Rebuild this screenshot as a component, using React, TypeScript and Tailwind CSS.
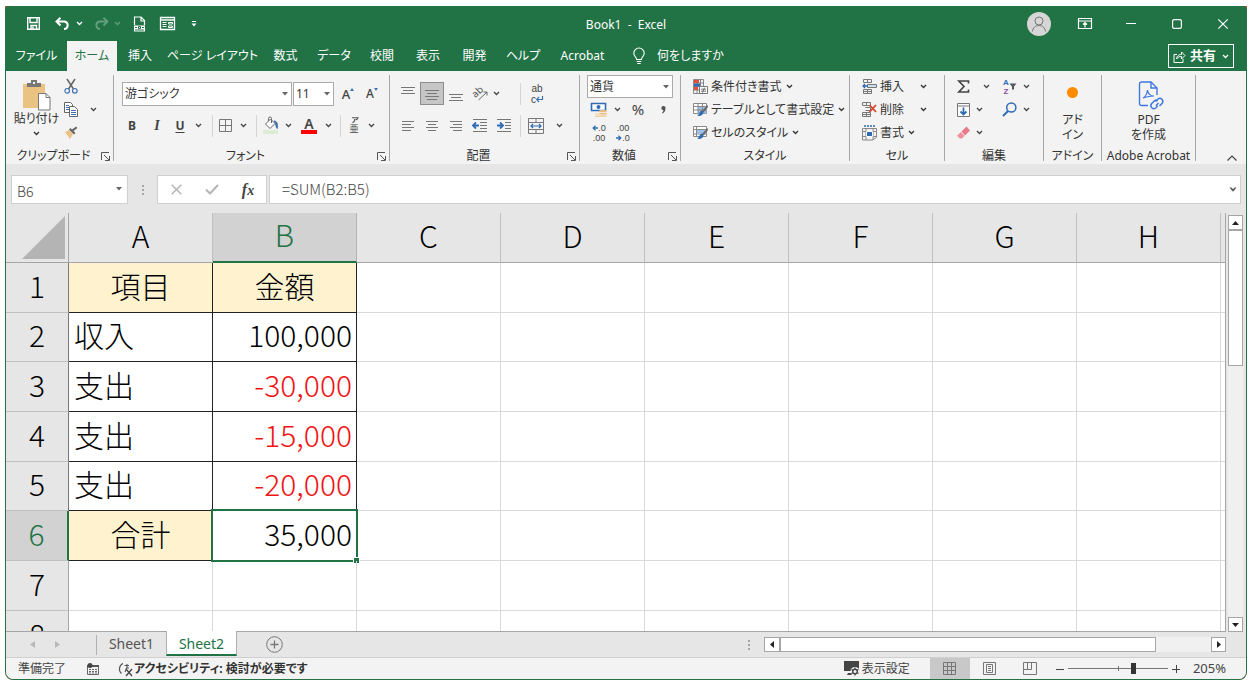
import type { ReactNode } from 'react'

const UI_FONT = "font-['Noto_Sans','Noto_Sans_CJK_JP',sans-serif]"
const SHEET_FONT = "font-['Noto_Sans_CJK_JP',sans-serif] [font-feature-settings:normal]"

const tabs = [
  { label: 'ファイル', width: 'w-[61px]' },
  { label: 'ホーム', width: 'w-[50px]', active: true },
  { label: '挿入', width: 'w-[46px]' },
  { label: 'ページ レイアウト', width: 'w-[99px]' },
  { label: '数式', width: 'w-[47px]' },
  { label: 'データ', width: 'w-[50px]' },
  { label: '校閲', width: 'w-[46px]' },
  { label: '表示', width: 'w-[46px]' },
  { label: '開発', width: 'w-[47px]' },
  { label: 'ヘルプ', width: 'w-[50px]' },
  { label: 'Acrobat', width: 'w-[69px]' },
]

const columns = ['A', 'B', 'C', 'D', 'E', 'F', 'G', 'H']

const rows = [
  { n: 1, height: 'h-[50px]', a: '項目', b: '金額', head: true },
  { n: 2, height: 'h-[49px]', a: '収入', b: '100,000' },
  { n: 3, height: 'h-[50px]', a: '支出', b: '-30,000' },
  { n: 4, height: 'h-[50px]', a: '支出', b: '-15,000' },
  { n: 5, height: 'h-[49px]', a: '支出', b: '-20,000' },
  { n: 6, height: 'h-[50px]', a: '合計', b: '35,000', total: true },
  { n: 7, height: 'h-[50px]', a: '', b: '' },
  { n: 8, height: 'h-[50px]', a: '', b: '' },
]

/* ---------- small shared pieces ---------- */

function Svg({ w, h, children }: { w: number; h: number; children: ReactNode }) {
  return (
    <svg width={w} height={h} viewBox={`0 0 ${w} ${h}`} fill="none" className="shrink-0 overflow-visible" aria-hidden="true">
      {children}
    </svg>
  )
}

function Chevron() {
  return (
    <Svg w={7} h={5}>
      <path d="M1 1l2.500 2.500L6 1" stroke="currentColor" strokeWidth="1.300" />
    </Svg>
  )
}

function Caret() {
  return (
    <Svg w={6} h={4}>
      <path d="M0 0h6L3 3.500z" fill="#666" />
    </Svg>
  )
}

function Tool({ label, width = 'w-6', className = '', children }: { label: string; width?: string; className?: string; children: ReactNode }) {
  return (
    <button type="button" aria-label={label} className={`flex h-[23px] shrink-0 items-center justify-center text-[#444] ${width} ${className}`}>
      {children}
    </button>
  )
}

function Divider({ width }: { width: string }) {
  return (
    <span className={`flex justify-center ${width}`}>
      <span className="h-[22px] w-px bg-[#d4d4d4]" />
    </span>
  )
}

function Group({ label, width, launcher, children }: { label: string; width: string; launcher?: boolean; children: ReactNode }) {
  return (
    <section aria-label={label} className={`flex h-[86px] shrink-0 flex-col border-r border-[#a6a6a6] ${width}`}>
      <div className="h-[69px] shrink-0">{children}</div>
      <div className="flex h-6 shrink-0 items-center">
        <span className="grow text-center text-xs whitespace-nowrap">{label}</span>
        {launcher && (
          <button type="button" aria-label={`${label}の設定`} className="mr-[3px]">
            <Svg w={9} h={9}>
              <path d="M.5 8V.5H8M3 3l5 5M8.500 4v4.500H4" stroke="#555" />
            </Svg>
          </button>
        )}
      </div>
    </section>
  )
}

function Lines({ rows }: { rows: [number, number, number][] }) {
  return (
    <Svg w={16} h={16}>
      {rows.map(([y, x1, x2]) => (
        <path key={y} d={`M${x1} ${y}.5H${x2}`} stroke="#777" />
      ))}
    </Svg>
  )
}

/* ---------- title bar ---------- */

function TitleBar() {
  return (
    <div className="grid h-[35px] grid-cols-[1fr_auto_1fr] items-center text-white">
      <div className="flex h-full items-center pl-[18px]">
        <button type="button" aria-label="上書き保存" className="flex w-5 justify-center">
          <Svg w={13} h={13}>
            <path d="M.7.700h11.600v11.600H.7zM3 1v4.500h7V1M4 12V8.500h5.500V12M6 9.500V12" stroke="#fff" strokeWidth="1.400" />
          </Svg>
        </button>
        <button type="button" aria-label="元に戻す" className="ml-2 flex w-[22px] justify-center">
          <Svg w={15} h={13}>
            <path d="M5.500.700L1.500 4.500l4 4M2 4.500h7.500a3.800 3.800 0 0 1 0 7.500H9" stroke="#fff" strokeWidth="2" />
          </Svg>
        </button>
        <button type="button" aria-label="元に戻す一覧" className="flex w-3 justify-center">
          <Chevron />
        </button>
        <button type="button" aria-label="やり直し" className="ml-1.5 flex w-5 justify-center opacity-30">
          <Svg w={15} h={13}>
            <path d="M9.500.700l4 3.800-4 4M13 4.500H5.500a3.800 3.800 0 0 0 0 7.500H6" stroke="#fff" strokeWidth="1.800" />
          </Svg>
        </button>
        <button type="button" aria-label="やり直し一覧" className="flex w-3 justify-center opacity-30">
          <Chevron />
        </button>
        <button type="button" aria-label="PDF 出力" className="ml-1 flex w-6 justify-center">
          <Svg w={13} h={16}>
            <path d="M1.500 9V1h6.500l3.500 3.500V9M8 1v4h3.500M1.500 13v2h10v-2" stroke="#fff" strokeWidth="1.200" />
            <path d="M1 9.500h11v4H1z" fill="#fff" />
            <path d="M2 11.500h2M9 11.500h2M5.500 10.500h2v2h-2z" stroke="#217346" />
          </Svg>
        </button>
        <button type="button" aria-label="フォーム" className="ml-1 flex w-6 justify-center">
          <Svg w={15} h={13}>
            <path d="M.5.500h14v12H.5zM.5 3h14" stroke="#fff" strokeWidth="1.300" />
            <path d="M2.500 5.500h4M2.500 7.500h4M2.500 9.500h4M8.500 5.500h4v1.500h-4zM8.500 9h4v1.500h-4z" stroke="#fff" />
          </Svg>
        </button>
        <button type="button" aria-label="クイック アクセスの設定" className="ml-[3px] flex w-6 justify-center">
          <Svg w={6} h={6}>
            <path d="M1 .5h4" stroke="#fff" />
            <path d="M.5 2.500h5L3 5.500z" fill="#fff" />
          </Svg>
        </button>
      </div>
      <h1 className="pt-0.5 text-xs whitespace-pre">Book1  -  Excel</h1>
      <div className="flex h-full items-center justify-end pr-3">
        <button type="button" aria-label="アカウント" className="flex size-6 items-center justify-center rounded-full bg-[#d6d6d6]">
          <Svg w={16} h={16}>
            <circle cx="8" cy="5" r="4" stroke="#777" />
            <path d="M1.500 15.500c.5-4 3-6 6.500-6s6 2 6.500 6" stroke="#777" />
          </Svg>
        </button>
        <button type="button" aria-label="リボンの表示オプション" className="ml-[22px] flex w-6 justify-center">
          <Svg w={14} h={11}>
            <path d="M.5.500h13v10H.5zM.5 3h13M7 9.500V5M5 6.500L7 4.500l2 2" stroke="#fff" strokeWidth="1.200" />
          </Svg>
        </button>
        <button type="button" aria-label="最小化" className="ml-[22px] flex w-6 justify-center">
          <Svg w={10} h={10}>
            <path d="M0 4.500h10" stroke="#fff" strokeWidth="1.200" />
          </Svg>
        </button>
        <button type="button" aria-label="最大化" className="ml-[22px] flex w-6 justify-center">
          <Svg w={10} h={10}>
            <rect x=".6" y=".6" width="8.800" height="8.800" rx="1.500" stroke="#fff" strokeWidth="1.200" />
          </Svg>
        </button>
        <button type="button" aria-label="閉じる" className="ml-[22px] flex w-6 justify-center">
          <Svg w={10} h={10}>
            <path d="M.3.300l9.400 9.400M9.700.300L.3 9.700" stroke="#fff" strokeWidth="1.200" />
          </Svg>
        </button>
      </div>
    </div>
  )
}

function TabBar() {
  return (
    <nav className="flex h-[30px] items-center pl-px text-xs text-white">
      {tabs.map((t) => (
        <button
          key={t.label}
          type="button"
          className={`flex h-full shrink-0 items-center justify-center whitespace-nowrap ${t.width} ${t.active ? 'bg-[#f3f3f3] text-[#217346]' : ''}`}
        >
          {t.label}
        </button>
      ))}
      <button type="button" className="ml-4 flex items-center gap-3 whitespace-nowrap">
        <Svg w={12} h={18}>
          <path d="M3.700 12.500c0-2-2.900-3.300-2.900-6.300a5.200 5.200 0 0 1 10.400 0c0 3-2.900 4.300-2.900 6.300zM3.700 14.500h4.600M4.300 16.500h3.400" stroke="#fff" strokeWidth="1.100" />
        </Svg>
        何をしますか
      </button>
      <button type="button" className="mr-[13px] ml-auto flex h-6 items-center gap-0.5 border border-white px-1 text-[13px] font-bold whitespace-nowrap">
        <Svg w={13} h={13}>
          <path d="M4 4.500H1v8h9V9M3.500 9c.5-3.500 2.500-4.500 5-4.500V2L12 5.500 8.500 9V6.500c-2 0-3.500.5-5 2.500z" stroke="#fff" />
        </Svg>
        <span className="ml-0.5">共有</span>
        <span className="ml-1">
          <Chevron />
        </span>
      </button>
    </nav>
  )
}

/* ---------- ribbon ---------- */

function ClipboardGroup() {
  return (
    <Group label="クリップボード" width="w-[108px]" launcher>
      <div className="flex h-full pl-0.5">
        <button type="button" className="flex w-[57px] flex-col items-center pt-1 text-xs whitespace-nowrap">
          <Svg w={27} h={32}>
            <path d="M0 5h22v24H0z" fill="#eac282" />
            <path d="M4 4h4V1h6v3h4v4H4z" fill="#777" />
            <path d="M10 3h2v2h-2z" fill="#f3f3f3" />
            <path d="M15.500 14.500h7.500l4 4v12.500H15.500z" fill="#fff" stroke="#777" />
            <path d="M23 14.500v4h4" stroke="#777" />
          </Svg>
          <span className="leading-4">貼り付け</span>
          <span className="mt-1">
            <Chevron />
          </span>
        </button>
        <div className="flex w-3 flex-col items-center">
          <Tool label="切り取り" width="w-5">
            <Svg w={14} h={15}>
              <path d="M3 0l6.500 10M11 0L4.500 10" stroke="#666" strokeWidth="1.500" />
              <circle cx="3.200" cy="11.800" r="2.300" stroke="#3f72b0" strokeWidth="1.200" />
              <circle cx="10.800" cy="11.800" r="2.300" stroke="#3f72b0" strokeWidth="1.200" />
            </Svg>
          </Tool>
          <Tool label="コピー" width="w-5">
            <Svg w={14} h={15}>
              <path d="M.5.500h6l2 2v8h-8z" fill="#fff" stroke="#666" />
              <path d="M2 3.500h3M2 5.500h3M2 7.500h3" stroke="#3f72b0" />
              <path d="M5.500 4.500h5l3 3v7h-8z" fill="#fff" stroke="#666" />
              <path d="M7 8.500h5M7 10.500h5M7 12.500h5" stroke="#3f72b0" />
            </Svg>
          </Tool>
          <Tool label="書式のコピー" width="w-5">
            <Svg w={14} h={13}>
              <path d="M1 6l4-2 4 4-3 5z" fill="#eac282" />
              <path d="M5 3.500l5 5 1.500-1.500-2-2L13.500 2 12 .5 8 3.500l-1.500-1.500z" fill="#666" />
            </Svg>
          </Tool>
        </div>
        <Tool label="コピーのオプション" width="w-8" className="self-center">
          <Chevron />
        </Tool>
      </div>
    </Group>
  )
}

function FontGroup() {
  return (
    <Group label="フォント" width="w-[276px]" launcher>
      <div className="flex flex-col gap-2 pt-[7px] pl-2">
        <div className="flex items-center">
          <label className="relative flex">
            <select aria-label="フォント名" className="h-6 w-[170px] appearance-none border border-[#ababab] bg-white pl-0.5 text-xs text-[#333]">
              <option>游ゴシック</option>
            </select>
            <span className="pointer-events-none absolute top-2.5 right-1">
              <Caret />
            </span>
          </label>
          <label className="relative ml-px flex">
            <select aria-label="フォント サイズ" className="h-6 w-[41px] appearance-none border border-[#ababab] bg-white pl-0.5 text-xs text-[#333]">
              <option>11</option>
            </select>
            <span className="pointer-events-none absolute top-2.5 right-1">
              <Caret />
            </span>
          </label>
          <Tool label="フォント サイズの拡大" width="w-7">
            <span className="text-[13px] leading-none font-medium">A</span>
            <span className="-mt-2.5">
              <Svg w={4} h={3}>
                <path d="M0 3h4L2 0z" fill="#3f72b0" />
              </Svg>
            </span>
          </Tool>
          <Tool label="フォント サイズの縮小" width="w-5">
            <span className="text-xs leading-none font-medium">A</span>
            <span className="-mt-2.5">
              <Svg w={4} h={3}>
                <path d="M0 0h4L2 3z" fill="#3f72b0" />
              </Svg>
            </span>
          </Tool>
        </div>
        <div className="flex items-center">
          <Tool label="太字" width="w-5">
            <span className="text-xs font-bold">B</span>
          </Tool>
          <Tool label="斜体" width="w-[30px]">
            <span className="font-['Liberation_Serif',serif] text-sm font-bold italic">I</span>
          </Tool>
          <Tool label="下線" width="w-4">
            <span className="text-xs font-bold underline underline-offset-2">U</span>
          </Tool>
          <Tool label="下線の種類" width="w-5">
            <Chevron />
          </Tool>
          <Divider width="w-2" />
          <Tool label="罫線" width="w-[19px]">
            <Svg w={13} h={13}>
              <path d="M.5.500h12v12H.5zM6.500.500v12M.5 6.500h12" stroke="#777" />
            </Svg>
          </Tool>
          <Tool label="罫線の種類" width="w-4">
            <Chevron />
          </Tool>
          <Divider width="w-2.5" />
          <Tool label="塗りつぶしの色" width="w-5">
            <Svg w={16} h={17}>
              <path d="M0 13h15v4H0z" fill="#dcecd6" />
              <path d="M2.500 7l5-5 4.500 4.500-5 5z" fill="#fff" stroke="#666" />
              <path d="M5.500 4V1.500a1.500 1.500 0 0 1 3 0V6" stroke="#666" />
              <path d="M11 4c3 0 4 3 3.200 7.500C12.500 10 13.500 7 11 4z" fill="#3f72b0" stroke="#3f72b0" />
            </Svg>
          </Tool>
          <Tool label="塗りつぶしの色の選択" width="w-3.5">
            <Chevron />
          </Tool>
          <Tool label="フォントの色" width="w-7">
            <span className="w-4 border-b-4 border-[#f00] text-center text-sm leading-[13px] font-semibold">A</span>
          </Tool>
          <Tool label="フォントの色の選択" width="w-2.5">
            <Chevron />
          </Tool>
          <Divider width="w-3.5" />
          <Tool label="ふりがな" width="w-3.5" className="flex-col">
            <Svg w={9} h={6}>
              <path d="M2 .7h6C7.500 2 6.500 2.800 5.500 3M4.800 2c0 1.500-.8 3-2.300 3.800" stroke="#555" strokeWidth="1.100" />
            </Svg>
            <span className="text-[9px] leading-[11px]">亜</span>
          </Tool>
          <Tool label="ふりがなの設定" width="w-5">
            <Chevron />
          </Tool>
        </div>
      </div>
    </Group>
  )
}

function AlignGroup() {
  return (
    <Group label="配置" width="w-[190px]" launcher>
      <div className="flex flex-col gap-[9px] pt-[7px] pl-1.5">
        <div className="flex items-center">
          <Tool label="上揃え">
            <Lines rows={[[1, 1, 15], [4, 3, 13], [7, 1, 15]]} />
          </Tool>
          <Tool label="上下中央揃え" className="border border-[#8c8c8c] bg-[#c6c6c6]">
            <Lines rows={[[4, 1, 15], [7, 3, 13], [10, 1, 15], [13, 3, 13]]} />
          </Tool>
          <Tool label="下揃え">
            <Lines rows={[[8, 1, 15], [11, 3, 13], [14, 1, 15]]} />
          </Tool>
          <Tool label="方向">
            <Svg w={16} h={15}>
              <text x="1" y="10" fontSize="10" fill="#555" transform="rotate(-42 5 8)">ab</text>
              <path d="M6.500 14L15 6M11.500 6H15v3.500" stroke="#666" />
            </Svg>
          </Tool>
          <Tool label="方向の選択" width="w-2">
            <Chevron />
          </Tool>
          <Divider width="ml-[15px] w-2.5" />
          <Tool label="折り返して全体を表示する" className="flex-col font-['Liberation_Sans',sans-serif] text-[10px]">
            <span className="leading-[11px]">ab</span>
            <span className="flex items-center leading-[11px]">
              c
              <Svg w={7} h={7}>
                <path d="M6.500 0v3.500H1M3 1L.7 3.500 3 6" stroke="#3f72b0" strokeWidth="1.200" />
              </Svg>
            </span>
          </Tool>
        </div>
        <div className="flex items-center">
          <Tool label="左揃え">
            <Lines rows={[[3, 2, 14], [6, 2, 11], [9, 2, 14], [12, 2, 11]]} />
          </Tool>
          <Tool label="中央揃え">
            <Lines rows={[[3, 2, 14], [6, 4, 12], [9, 2, 14], [12, 4, 12]]} />
          </Tool>
          <Tool label="右揃え">
            <Lines rows={[[3, 2, 14], [6, 5, 14], [9, 2, 14], [12, 5, 14]]} />
          </Tool>
          <Tool label="インデントを減らす">
            <Svg w={16} h={14}>
              <path d="M1 .5h14M8 3.500h7M8 6.500h7M8 9.500h7M1 12.500h14" stroke="#777" />
              <path d="M7 6.500H1M4 3.500l-3 3 3 3" stroke="#2f6cb3" strokeWidth="1.800" />
            </Svg>
          </Tool>
          <Tool label="インデントを増やす">
            <Svg w={16} h={14}>
              <path d="M1 .5h14M9 3.500h6M9 6.500h6M9 9.500h6M1 12.500h14" stroke="#777" />
              <path d="M1 6.500h6M4 3.500l3 3-3 3" stroke="#2f6cb3" strokeWidth="1.800" />
            </Svg>
          </Tool>
          <Divider width="w-2" />
          <Tool label="セルを結合して中央揃え">
            <Svg w={16} h={16}>
              <path d="M.5.500h15v15H.5zM.5 4.500h15M.5 11.500h15M8 .5v4M8 11.500v4" stroke="#777" />
              <path d="M3 8h10M5 6L3 8l2 2M11 6l2 2-2 2" stroke="#2f6cb3" strokeWidth="1.200" />
            </Svg>
          </Tool>
          <Tool label="結合の種類" width="w-[22px]">
            <Chevron />
          </Tool>
        </div>
      </div>
    </Group>
  )
}

function NumberGroup() {
  return (
    <Group label="数値" width="w-[101px]" launcher>
      <div className="pl-[7px]">
        <label className="relative flex">
          <select aria-label="表示形式" className="h-[23px] w-[86px] appearance-none border border-[#ababab] bg-white pl-0.5 text-xs text-[#333]">
            <option>通貨</option>
          </select>
          <span className="pointer-events-none absolute top-2.5 left-[76px]">
            <Caret />
          </span>
        </label>
        <div className="flex">
          <Tool label="通貨表示形式">
            <Svg w={16} h={15}>
              <path d="M.5 1.500h14v7H.5z" fill="#fff" stroke="#2f6cb3" strokeWidth="1.600" />
              <circle cx="7.500" cy="5" r="2" fill="#2f6cb3" />
              <path d="M8.500 8h7v6.500h-7z" fill="#e8bd82" />
              <path d="M4 11.500h6V15H4z" fill="#f0cfa0" />
              <path d="M8.500 10.500h7M4 13h11" stroke="#fff" strokeWidth=".7" />
            </Svg>
          </Tool>
          <Tool label="通貨の種類" width="w-3">
            <Chevron />
          </Tool>
          <Tool label="パーセント スタイル" width="w-[30px]">
            <span className="text-[15px]">%</span>
          </Tool>
          <Tool label="桁区切りスタイル" width="w-5">
            <Svg w={5} h={8}>
              <path d="M2.500 0a2 2 0 0 1 2 2.500c0 2.500-1.500 4.500-3 5l-.5-.8c.8-.5 1.300-1.500 1.300-2.500A2 2 0 0 1 2.500 0z" fill="#555" />
            </Svg>
          </Tool>
        </div>
        <div className="flex">
          <Tool label="小数点以下の表示桁数を増やす" className="flex-col font-['Liberation_Sans',sans-serif] text-[9px]">
            <span className="flex items-center leading-[10px]">
              <Svg w={6} h={6}>
                <path d="M6 3H1.500M3.500.700L1.200 3l2.300 2.300" stroke="#2f6cb3" strokeWidth="1.300" />
              </Svg>
              .0
            </span>
            <span className="leading-[10px]">.00</span>
          </Tool>
          <Tool label="小数点以下の表示桁数を減らす" className="flex-col font-['Liberation_Sans',sans-serif] text-[9px]">
            <span className="leading-[10px]">.00</span>
            <span className="flex items-center leading-[10px]">
              <Svg w={6} h={6}>
                <path d="M0 3h4.500M2.500.700L4.800 3 2.500 5.300" stroke="#2f6cb3" strokeWidth="1.300" />
              </Svg>
              .0
            </span>
          </Tool>
        </div>
      </div>
    </Group>
  )
}

function MenuRow({ icon, label, wide }: { icon: ReactNode; label: string; wide?: boolean }) {
  return (
    <button type="button" className="flex h-[23px] items-center text-xs whitespace-nowrap">
      {icon}
      <span className="ml-[3px]">{label}</span>
      <span className={wide ? 'ml-4' : 'ml-1'}>
        <Chevron />
      </span>
    </button>
  )
}

function StylesGroup() {
  return (
    <Group label="スタイル" width="w-[169px]">
      <div className="flex flex-col items-start pl-3">
        <MenuRow
          label="条件付き書式"
          icon={
            <Svg w={15} h={15}>
              <path d="M.5.500h10v14H.5zM.5 4h10M.5 7.500h10M.5 11h10M4 .5v14M7.500.500v14" stroke="#888" />
              <path d="M1 1h5v3H1zM1 8h4v3H1z" fill="#e0503c" />
              <path d="M1 4.500h6v3H1z" fill="#2f6cb3" />
              <path d="M6.500 7.500h8v7h-8z" fill="#fff" stroke="#777" />
              <path d="M8 10.200h5M8 12.200h5M11.500 8.700l-2 5" stroke="#555" strokeWidth=".8" />
            </Svg>
          }
        />
        <MenuRow
          label="テーブルとして書式設定"
          icon={
            <Svg w={15} h={15}>
              <path d="M.5 1.500h13v10H.5z" fill="#fff" stroke="#888" />
              <path d="M5 5h8.500v6.500H5z" fill="#9cc0e6" />
              <path d="M.5 4.500h13M.5 8h13M5 1.500v10M9.500 1.500v10" stroke="#888" />
              <path d="M14.500 3L9 9l1.500 1.500L15 5z" fill="#666" />
              <path d="M9 8.500c-3 .5-2 4-5 5 3 1 6 0 6.500-3z" fill="#2f6cb3" />
            </Svg>
          }
        />
        <MenuRow
          label="セルのスタイル"
          icon={
            <Svg w={15} h={15}>
              <path d="M.5 1.500h13v10H.5z" fill="#fff" stroke="#888" />
              <path d="M.5 4.500h13M3.500 1.500v10M.5 9h13" stroke="#888" />
              <path d="M4 5h8v4H4z" fill="#9cc0e6" />
              <path d="M14.500 3L9 9l1.500 1.500L15 5z" fill="#666" />
              <path d="M9 8.500c-3 .5-2 4-5 5 3 1 6 0 6.500-3z" fill="#2f6cb3" />
            </Svg>
          }
        />
      </div>
    </Group>
  )
}

function CellsGroup() {
  return (
    <Group label="セル" width="w-[95px]">
      <div className="flex flex-col items-start pl-3">
        <MenuRow
          label="挿入"
          wide
          icon={
            <Svg w={15} h={15}>
              <path d="M1.500.500h8v3h-8zM5.500.500v3M1.500 10.500h8v4h-8zM5.500 10.500v4M1.500 12.500h8" stroke="#777" />
              <path d="M5.500 5.500h9v3h-9z" fill="#cfe0f3" stroke="#777" />
              <path d="M6 7H1M3 5L1 7l2 2" stroke="#2f6cb3" strokeWidth="1.300" />
            </Svg>
          }
        />
        <MenuRow
          label="削除"
          wide
          icon={
            <Svg w={15} h={15}>
              <path d="M.5.500h8v3h-8zM4.500.500v3M3.500 5.500h5v3h-5M.5 10.500h8v4h-8zM4.500 10.500v4M.5 12.500h8" stroke="#777" />
              <path d="M7.500 3l6.500 7M14 3l-6.500 7" stroke="#d8432b" strokeWidth="1.800" />
            </Svg>
          }
        />
        <MenuRow
          label="書式"
          icon={
            <Svg w={15} h={16}>
              <path d="M2 1h11" stroke="#2f6cb3" strokeDasharray="2 1" strokeWidth="1.500" />
              <path d="M.5 3.500h14v9l-4 2.500H.5zM.5 6.500h14M.5 11.500h14M4 3.500V15M11 3.500V15" stroke="#888" />
              <path d="M4.500 6.500h6v5h-6z" fill="#2f6cb3" stroke="#fff" />
            </Svg>
          }
        />
      </div>
    </Group>
  )
}

function EditGroup() {
  return (
    <Group label="編集" width="w-[99px]">
      <div className="pl-2">
        <div className="flex">
          <Tool label="オート SUM" width="w-5">
            <Svg w={13} h={13}>
              <path d="M11.500 3.500V1H1.800L7 6.500 1.800 12h9.700V9.500" stroke="#444" strokeWidth="1.600" />
            </Svg>
          </Tool>
          <Tool label="オート SUM の種類" width="w-[26px]">
            <Chevron />
          </Tool>
          <Tool label="並べ替えとフィルター" width="w-[22px]">
            <span className="flex flex-col font-['Liberation_Sans',sans-serif] text-[8px] leading-[9px] font-bold">
              <span className="text-[#2f6cb3]">A</span>
              <span className="text-[#8a4fa3]">Z</span>
            </span>
            <Svg w={8} h={7}>
              <path d="M.5.500h7L5 3.500V6.500H3V3.500z" fill="#555" />
            </Svg>
          </Tool>
          <Tool label="並べ替えの種類" width="w-2.5">
            <Chevron />
          </Tool>
        </div>
        <div className="flex">
          <Tool label="フィル" width="w-5">
            <Svg w={13} h={14}>
              <path d="M.5.500h12v13H.5zM.5 3h12" fill="#fff" stroke="#777" />
              <path d="M6.500 4.500V11M3.500 8.500l3 3 3-3" stroke="#2f6cb3" strokeWidth="1.800" />
            </Svg>
          </Tool>
          <Tool label="フィルの種類" width="w-3">
            <Chevron />
          </Tool>
          <Tool label="検索と選択" width="ml-3 w-6">
            <Svg w={15} h={15}>
              <circle cx="9.300" cy="5.500" r="4.600" stroke="#2f6cb3" strokeWidth="1.500" />
              <path d="M6 9l-5 5" stroke="#2f6cb3" strokeWidth="2" />
            </Svg>
          </Tool>
          <Tool label="検索の種類" width="w-2.5">
            <Chevron />
          </Tool>
        </div>
        <div className="flex">
          <Tool label="クリア" width="w-5">
            <Svg w={13} h={13}>
              <path d="M4.500 5.500L9.500.500l3.500 4-5 5z" fill="#e8788c" />
              <path d="M4 6l3.500 4L5 12.500H3L0 9.800z" fill="#f0909f" />
            </Svg>
          </Tool>
          <Tool label="クリアの種類" width="w-3">
            <Chevron />
          </Tool>
        </div>
      </div>
    </Group>
  )
}

function Ribbon() {
  return (
    <div className="flex h-[93px] shrink-0 overflow-hidden bg-[#f3f3f3] pt-1 text-[#333]">
      <ClipboardGroup />
      <FontGroup />
      <AlignGroup />
      <NumberGroup />
      <StylesGroup />
      <CellsGroup />
      <EditGroup />
      <Group label="アドイン" width="w-[58px]">
        <button type="button" className="flex w-full flex-col items-center pt-3 text-xs leading-[15px]">
          <span className="mb-3.5 size-[11px] rounded-full bg-[#ff8c00]" />
          <span>アド</span>
          <span>イン</span>
        </button>
      </Group>
      <Group label="Adobe Acrobat" width="w-[94px]">
        <button type="button" className="flex w-full flex-col items-center pt-1.5 text-xs leading-[15px]">
          <span className="mb-0.5 pl-1">
            <Svg w={26} h={29}>
              <path d="M10 24.500H3.500a2 2 0 0 1-2-2V3a2 2 0 0 1 2-2H13l6 6v7" stroke="#3f78e0" strokeWidth="1.400" />
              <path d="M13 1v6h6" stroke="#3f78e0" strokeWidth="1.400" />
              <path d="M5 17c2-1 4-4 4.500-8 .5 4 3 6 6.500 6-4 0-7 .5-11 2z" stroke="#3f78e0" strokeWidth="1.200" />
              <path d="M17.500 20.500l2.500-2.500a3 3 0 0 1 4.200 4.200L21.500 25M20.500 22l-2.500 2.700M19.500 20l-1-1a3 3 0 0 0-2 .8l-3 3a3 3 0 0 0 4.200 4.200l2-2" stroke="#3f78e0" strokeWidth="1.500" />
            </Svg>
          </span>
          <span>PDF</span>
          <span>を作成</span>
        </button>
      </Group>
      <button type="button" aria-label="リボンを折りたたむ" className="mr-[9px] mb-[3px] ml-auto self-end">
        <Svg w={10} h={6}>
          <path d="M.5 5.500L5 1l4.500 4.500" stroke="#444" strokeWidth="1.200" />
        </Svg>
      </button>
    </div>
  )
}

/* ---------- formula bar ---------- */

function Dots() {
  return (
    <span className="flex flex-col gap-0.5">
      <span className="size-0.5 bg-[#a6a6a6]" />
      <span className="size-0.5 bg-[#a6a6a6]" />
      <span className="size-0.5 bg-[#a6a6a6]" />
    </span>
  )
}

function FormulaBar() {
  return (
    <div className={`flex shrink-0 items-center pt-[11px] pr-[5px] pb-[9px] pl-[5px] text-[#444] ${SHEET_FONT}`}>
      <label className="relative flex">
        <input aria-label="名前ボックス" defaultValue="B6" className="h-[29px] w-[117px] border border-[#cfcfcf] bg-white px-[5px] pt-0.5 text-sm font-light" />
        <span className="pointer-events-none absolute top-3 right-1.5">
          <Caret />
        </span>
      </label>
      <span className="flex w-[29px] justify-center">
        <Dots />
      </span>
      <div className="flex h-[29px] w-[110px] items-center border border-[#cfcfcf] bg-white">
        <Tool label="キャンセル" width="w-9">
          <Svg w={11} h={11}>
            <path d="M.7.700l9.600 9.600M10.300.700L.7 10.300" stroke="#b5b5b5" strokeWidth="1.500" />
          </Svg>
        </Tool>
        <Tool label="入力" width="w-9">
          <Svg w={14} h={11}>
            <path d="M1 5.500l4 4L13 1" stroke="#b5b5b5" strokeWidth="2" />
          </Svg>
        </Tool>
        <Tool label="関数の挿入" width="w-9">
          <span className="font-['Liberation_Serif',serif] text-base font-bold italic">
            f<span className="text-sm">x</span>
          </span>
        </Tool>
      </div>
      <label className="relative ml-0.5 flex grow">
        <input aria-label="数式バー" defaultValue="=SUM(B2:B5)" className="h-[29px] w-full border border-[#cfcfcf] bg-white px-3 pb-0.5 text-[15px] font-light" />
        <span className="pointer-events-none absolute top-3 right-1">
          <Svg w={8} h={5}>
            <path d="M.5.500h2L4 2.300 5.500.500h2L4 4.800z" fill="#555" />
          </Svg>
        </span>
      </label>
    </div>
  )
}

/* ---------- sheet ---------- */

function cellTone(row: (typeof rows)[number]) {
  return row.n <= 6 ? 'border-[#222]' : 'border-[#d9d9d9]'
}

function Sheet() {
  return (
    <div className="flex min-h-0 grow">
      <div className={`min-w-0 grow overflow-hidden border-r border-b border-[#a6a6a6] text-[30px] leading-none font-light text-black ${SHEET_FONT}`}>
        <table className="w-full table-fixed border-separate border-spacing-0 bg-white">
          <colgroup>
            <col className="w-[63px]" />
            {columns.map((c) => (
              <col key={c} className="w-36" />
            ))}
            <col />
          </colgroup>
          <thead>
            <tr className="h-[50px] bg-[#e6e6e6]">
              <th className="border-r border-b border-[#a6a6a6] p-0">
                <button type="button" aria-label="すべて選択" className="flex h-[49px] w-full items-end justify-end pr-0.5 pb-0.5">
                  <Svg w={44} h={44}>
                    <path d="M43 0v43H0z" fill="#b4b4b4" />
                  </Svg>
                </button>
              </th>
              {columns.map((c) => (
                <th
                  key={c}
                  scope="col"
                  className={`border-r px-0 pt-0 pb-1.5 font-light ${c === 'B' ? 'border-b-2 border-r-[#b4b4b4] border-b-[#217346] bg-[#d2d2d2] text-[#217346]' : 'border-b border-r-[#c0c0c0] border-b-[#a6a6a6]'}`}
                >
                  {c}
                </th>
              ))}
              <th className="border-b border-[#a6a6a6] p-0" />
            </tr>
          </thead>
          <tbody>
            {rows.map((row) => (
              <tr key={row.n} className={row.height}>
                <th
                  scope="row"
                  className={`border-b border-b-[#c0c0c0] px-0 pt-0 pb-1.5 font-light ${row.total ? 'border-r-2 border-r-[#217346] bg-[#d2d2d2] text-[#217346]' : row.n < 6 ? 'border-r border-r-[#777] bg-[#e6e6e6]' : 'border-r border-r-[#a6a6a6] bg-[#e6e6e6]'}`}
                >
                  {row.n}
                </th>
                <td className={`border-r border-b pt-0 pr-0 pb-1.5 ${cellTone(row)} ${row.head || row.total ? 'bg-[#fff2cf] pl-0 text-center' : 'pl-[5px]'}`}>{row.a}</td>
                <td
                  className={`relative border-r border-b pt-0 pb-1.5 pl-0 ${cellTone(row)} ${row.head ? 'bg-[#fff2cf] pr-0 text-center' : 'pr-1 text-right'} ${row.b.startsWith('-') ? 'text-[#f01414]' : ''}`}
                >
                  {row.b}
                  {row.total && (
                    <span className="absolute -inset-0.5 border-2 border-[#217346]">
                      <span className="absolute -right-[3px] -bottom-[3px] size-[5px] bg-[#217346] outline outline-white" />
                    </span>
                  )}
                </td>
                {columns.slice(2).map((c) => (
                  <td key={c} className="border-r border-b border-[#d9d9d9] p-0" />
                ))}
                <td className="border-b border-[#d9d9d9] p-0" />
              </tr>
            ))}
          </tbody>
        </table>
      </div>
      <div className="mt-0.5 mr-[3px] ml-0.5 flex w-[15px] shrink-0 flex-col bg-[#f0f0f0]">
        <button type="button" aria-label="上へ" className="flex h-[15px] items-center justify-center border border-[#a6a6a6] bg-white">
          <Svg w={7} h={4}>
            <path d="M0 4h7L3.500 0z" fill="#222" />
          </Svg>
        </button>
        <div className="h-[136px] border border-[#a6a6a6] bg-white" />
        <button type="button" aria-label="下へ" className="mt-auto flex h-[15px] items-center justify-center border border-[#a6a6a6] bg-white">
          <Svg w={7} h={4}>
            <path d="M0 0h7L3.500 4z" fill="#222" />
          </Svg>
        </button>
      </div>
    </div>
  )
}

function SheetTabs() {
  return (
    <div className="flex h-[26px] shrink-0 items-start border-b border-[#d0d0d0] text-sm text-[#555]">
      <div className="flex h-full w-[91px] items-center pl-6">
        <button type="button" aria-label="前のシート" className="flex w-[5px]">
          <Svg w={5} h={7}>
            <path d="M5 0v7L0 3.500z" fill="#b9b9b9" />
          </Svg>
        </button>
        <button type="button" aria-label="次のシート" className="ml-5 flex w-[5px]">
          <Svg w={5} h={7}>
            <path d="M0 0v7l5-3.500z" fill="#b9b9b9" />
          </Svg>
        </button>
        <span className="ml-auto h-5 w-px bg-[#b0b0b0]" />
      </div>
      <button type="button" className="h-6 w-[69px]">
        Sheet1
      </button>
      <button type="button" className="-mt-px h-[25px] w-[71px] border-x border-b-2 border-x-[#b0b0b0] border-b-[#217346] bg-white pt-0.5 text-[#217346]">
        Sheet2
      </button>
      <button type="button" aria-label="新しいシート" className="ml-[29px] self-center">
        <Svg w={17} h={17}>
          <circle cx="8.500" cy="8.500" r="7.800" stroke="#777" />
          <path d="M8.500 4.500v8M4.500 8.500h8" stroke="#777" strokeWidth="1.300" />
        </Svg>
      </button>
      <div className="mr-5 ml-auto flex h-full items-center">
        <Dots />
        <div className="ml-3.5 flex h-[15px] w-[462px] bg-[#f0f0f0]">
          <button type="button" aria-label="左へ" className="flex w-4 items-center justify-center border border-[#a6a6a6] bg-white">
            <Svg w={4} h={7}>
              <path d="M4 0v7L0 3.500z" fill="#222" />
            </Svg>
          </button>
          <div className="w-[376px] border border-[#a6a6a6] bg-white" />
          <button type="button" aria-label="右へ" className="ml-auto flex w-[15px] items-center justify-center border border-[#a6a6a6] bg-white">
            <Svg w={4} h={7}>
              <path d="M0 0v7l4-3.500z" fill="#222" />
            </Svg>
          </button>
        </div>
      </div>
    </div>
  )
}

function StatusBar() {
  return (
    <footer className="flex h-[21px] shrink-0 items-center rounded-b-lg bg-[#f3f3f3] pl-3 text-xs whitespace-nowrap text-[#444]">
      <span>準備完了</span>
      <button type="button" aria-label="マクロの記録" className="ml-[21px]">
        <Svg w={12} h={12}>
          <path d="M.5 2.500h11v9H.5z" stroke="#666" />
          <path d="M0 3h12" stroke="#555" strokeWidth="2" />
          <circle cx="3" cy="2.500" r="2.500" fill="#444" />
          <path d="M2 6.500h8M2 8.500h8M2 10h8" stroke="#666" strokeDasharray="2 1" />
        </Svg>
      </button>
      <button type="button" className="ml-[18px] flex items-center font-bold text-[#333]">
        <Svg w={17} h={16}>
          <path d="M6 2.500A6 6 0 0 0 4.500 12.500M7.500 4.500h4.500M10 3v3.500L8 11M10 7h2" stroke="#555" strokeWidth="1.100" />
          <path d="M9 8l6 7M15 8l-6 7" stroke="#444" strokeWidth="1.300" />
        </Svg>
        アクセシビリティ: 検討が必要です
      </button>
      <div className="mr-5 ml-auto flex h-full items-center">
        <button type="button" className="mr-5 flex items-center gap-0.5">
          <Svg w={16} h={15}>
            <path d="M0 0h15v10H0zM4 12h5v2H3z" fill="#444" />
            <circle cx="11" cy="10.500" r="4.500" fill="#f3f3f3" />
            <circle cx="11" cy="10.500" r="2.300" stroke="#444" strokeWidth="1.400" />
            <path d="M11 6.500v1.500M11 13v1.500M7.500 8.500l1.300.8M13.200 11.700l1.300.8M7.500 12.500l1.300-.8M13.200 9.300l1.300-.8" stroke="#444" strokeWidth="1.200" />
          </Svg>
          表示設定
        </button>
        <button type="button" aria-label="標準" className="flex h-full w-10 items-center justify-center bg-[#c8c8c8]">
          <Svg w={13} h={13}>
            <path d="M.5.500h12v12H.5zM4.500.500v12M8.500.500v12M.5 4.500h12M.5 8.500h12" stroke="#777" />
          </Svg>
        </button>
        <button type="button" aria-label="ページ レイアウト" className="flex h-full w-10 items-center justify-center">
          <Svg w={13} h={13}>
            <path d="M.5.500h12v12H.5zM3.500 2.500h6v8h-6zM5 4.500h3M5 6.500h3M5 8.500h3" stroke="#777" />
          </Svg>
        </button>
        <button type="button" aria-label="改ページ プレビュー" className="flex h-full w-10 items-center justify-center">
          <Svg w={14} h={13}>
            <path d="M.5.500h13v12H.5zM4.500.500v7M8.500.500v7h-8" stroke="#777" />
          </Svg>
        </button>
        <button type="button" aria-label="縮小" className="ml-1.5 flex w-3 shrink-0">
          <Svg w={8} h={8}>
            <path d="M0 4.500h8" stroke="#444" />
          </Svg>
        </button>
        <label className="relative flex h-full w-[100px] items-center">
          <span className="h-px w-full bg-[#777]" />
          <span className="absolute top-2 left-1/2 h-[5px] w-px bg-[#777]" />
          <input
            type="range"
            aria-label="ズーム"
            min={10}
            max={400}
            defaultValue={268}
            className="absolute inset-0 w-full appearance-none bg-transparent [&::-webkit-slider-thumb]:h-[11px] [&::-webkit-slider-thumb]:w-[5px] [&::-webkit-slider-thumb]:appearance-none [&::-webkit-slider-thumb]:bg-[#333]"
          />
        </label>
        <button type="button" aria-label="拡大" className="ml-1 flex">
          <Svg w={8} h={8}>
            <path d="M0 4.500h8M4.500 0v8" stroke="#444" />
          </Svg>
        </button>
        <span className="ml-[13px] text-[13px]">205%</span>
      </div>
    </footer>
  )
}

export default function App() {
  return (
    <div className={`h-screen bg-white px-[5px] pt-1.5 pb-[5px] [font-feature-settings:'palt'] ${UI_FONT}`}>
      <div className="flex h-full flex-col overflow-hidden rounded-b-lg bg-[#b5532f]">
        <header className="shrink-0 rounded-t bg-[#217346]">
          <TitleBar />
          <TabBar />
        </header>
        <main className="flex min-h-0 grow flex-col rounded-b-lg border-x border-b border-[#217346] bg-[#e6e6e6]">
          <Ribbon />
          <FormulaBar />
          <Sheet />
          <SheetTabs />
          <StatusBar />
        </main>
      </div>
    </div>
  )
}
